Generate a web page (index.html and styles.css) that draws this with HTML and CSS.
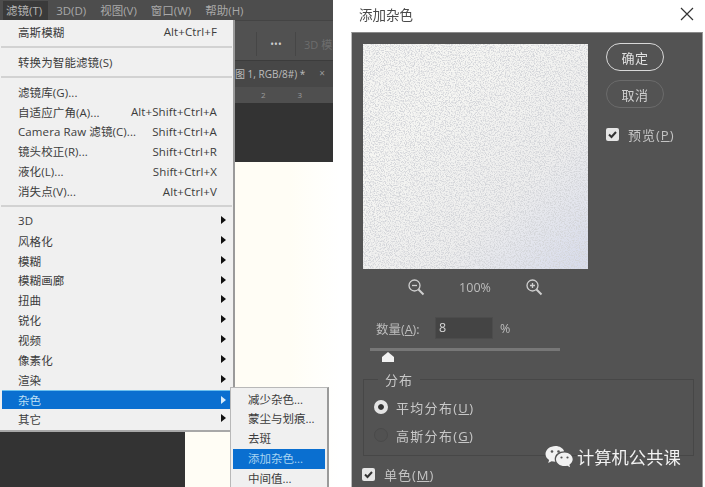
FILE: index.html
```html
<!DOCTYPE html>
<html lang="zh-CN">
<head>
  <meta charset="UTF-8">
  <title>添加杂色</title>
  <link rel="stylesheet" href="styles.css">
</head>
<body>
  <div class="shot">
    <!-- Left half: Photoshop filter menu -->
    <div class="ps">
      <div class="ps-window">
        <div class="menubar">
          <span class="menubar-item active">滤镜(T)</span>
          <span class="menubar-item">3D(D)</span>
          <span class="menubar-item">视图(V)</span>
          <span class="menubar-item">窗口(W)</span>
          <span class="menubar-item">帮助(H)</span>
        </div>
        <div class="options">
          <span class="options-sep"></span>
          <span class="options-dots">•••</span>
          <span class="options-sep"></span>
          <span class="options-3d">3D 模</span>
        </div>
        <div class="tabs"><span>图 1, RGB/8#) *</span><span class="tab-close">×</span></div>
        <div class="ruler"><span>2</span><span>3</span></div>
        <div class="workspace"></div>
      </div>
      <div class="ps-lower">
        <div class="ps-dark"></div>
        <div class="ps-cream"></div>
      </div>

      <div class="menu">
        <div class="row"><span>高斯模糊</span><span>Alt+Ctrl+F</span></div>
        <div class="sep"></div>
        <div class="row"><span>转换为智能滤镜(S)</span></div>
        <div class="sep"></div>
        <div class="row"><span>滤镜库(G)...</span></div>
        <div class="row"><span>自适应广角(A)...</span><span>Alt+Shift+Ctrl+A</span></div>
        <div class="row"><span>Camera Raw 滤镜(C)...</span><span>Shift+Ctrl+A</span></div>
        <div class="row"><span>镜头校正(R)...</span><span>Shift+Ctrl+R</span></div>
        <div class="row"><span>液化(L)...</span><span>Shift+Ctrl+X</span></div>
        <div class="row"><span>消失点(V)...</span><span>Alt+Ctrl+V</span></div>
        <div class="sep"></div>
        <div class="row sub"><span>3D</span></div>
        <div class="row sub"><span>风格化</span></div>
        <div class="row sub"><span>模糊</span></div>
        <div class="row sub"><span>模糊画廊</span></div>
        <div class="row sub"><span>扭曲</span></div>
        <div class="row sub"><span>锐化</span></div>
        <div class="row sub"><span>视频</span></div>
        <div class="row sub"><span>像素化</span></div>
        <div class="row sub"><span>渲染</span></div>
        <div class="row sub selected"><span>杂色</span></div>
        <div class="row sub"><span>其它</span></div>
      </div>

      <div class="submenu">
        <div class="subrow">减少杂色...</div>
        <div class="subrow">蒙尘与划痕...</div>
        <div class="subrow">去斑</div>
        <div class="subrow selected">添加杂色...</div>
        <div class="subrow">中间值...</div>
      </div>
    </div>

    <!-- Right half: Add Noise dialog -->
    <div class="dialog-wrap">
      <div class="titlebar">
        <span>添加杂色</span>
        <svg class="close" width="14" height="14" viewBox="0 0 14 14"><path d="M1 1l12 12M13 1L1 13" stroke="#333" stroke-width="1.2" fill="none"/></svg>
      </div>
      <div class="dialog">
        <div class="top">
          <div class="left-col">
            <svg class="preview" width="225" height="225" viewBox="0 0 225 225">
              <defs>
                <linearGradient id="tone" x1="0.3" y1="0.3" x2="0.95" y2="1">
                  <stop offset="0" stop-color="#f6f6f3"/>
                  <stop offset="0.55" stop-color="#eeeeee"/>
                  <stop offset="1" stop-color="#d8dcec"/>
                </linearGradient>
                <filter id="grain" x="0" y="0" width="100%" height="100%">
                  <feTurbulence type="fractalNoise" baseFrequency="0.8" numOctaves="3" seed="7"/>
                  <feGaussianBlur stdDeviation="0.5"/>
                  <feColorMatrix type="matrix" values="0 0 0 0 0.66  0 0 0 0 0.67  0 0 0 0 0.7  4 0 0 0 -1.75"/>
                </filter>
              </defs>
              <rect width="225" height="225" fill="url(#tone)"/>
              <rect width="225" height="225" filter="url(#grain)"/>
            </svg>
            <div class="zoom-row">
              <svg width="18" height="18" viewBox="0 0 18 18"><circle cx="7.5" cy="7.5" r="5.5" class="ico"/><path d="M5 7.5h5" class="ico"/><path d="M11.5 11.5l5 5" class="ico thick"/></svg>
              <span>100%</span>
              <svg width="18" height="18" viewBox="0 0 18 18"><circle cx="7.5" cy="7.5" r="5.5" class="ico"/><path d="M5 7.5h5M7.5 5v5" class="ico"/><path d="M11.5 11.5l5 5" class="ico thick"/></svg>
            </div>
          </div>
          <div class="side-col">
            <div class="btn primary">确定</div>
            <div class="btn">取消</div>
            <label class="check preview-check">
              <svg class="box" width="13" height="13" viewBox="0 0 13 13"><rect width="13" height="13" rx="2" fill="#e6e6e6"/><path d="M3 6.5l2.5 2.5 4.5-5" stroke="#333" stroke-width="2" fill="none"/></svg>
              <span>预览(<u>P</u>)</span>
            </label>
          </div>
        </div>

        <div class="amount">
          <span class="amount-label">数量(<u>A</u>):</span>
          <span class="amount-input">8</span>
          <span>%</span>
        </div>
        <div class="slider"><div class="thumb"></div></div>

        <fieldset class="group">
          <legend>分布</legend>
          <div class="radio"><span class="dot on"></span><span>平均分布(<u>U</u>)</span></div>
          <div class="radio"><span class="dot"></span><span>高斯分布(<u>G</u>)</span></div>
        </fieldset>

        <label class="check mono">
          <svg class="box" width="13" height="13" viewBox="0 0 13 13"><rect width="13" height="13" rx="2" fill="#e6e6e6"/><path d="M3 6.5l2.5 2.5 4.5-5" stroke="#333" stroke-width="2" fill="none"/></svg>
          <span>单色(<u>M</u>)</span>
        </label>

        <div class="watermark">
          <svg width="29" height="24" viewBox="0 0 29 24">
            <path d="M10.5 1C5 1 .5 4.6.5 9c0 2.500 1.400 4.600 3.600 6.100L3.200 18l3.300-1.700c1.200.3 2.500.5 3.800.5-.4-1-.6-1.900-.6-2.900 0-4.300 4.100-7.700 9.400-7.700C18 3.200 14.600 1 10.500 1z" fill="#f1f1f1"/>
            <path d="M19.500 7.500c-4.700 0-8.500 3-8.500 6.800s3.800 6.800 8.500 6.800c1 0 2-.1 2.900-.4l2.700 1.500-.7-2.500c2-1.300 3.300-3.200 3.300-5.400 0-3.800-3.500-6.800-8.200-6.800z" fill="#f1f1f1"/>
            <circle cx="7" cy="6.500" r="1.300" fill="#555"/><circle cx="13.500" cy="6.500" r="1.300" fill="#555"/>
            <circle cx="16.500" cy="12.500" r="1.100" fill="#555"/><circle cx="22.500" cy="12.500" r="1.100" fill="#555"/>
          </svg>
          <span>计算机公共课</span>
        </div>
      </div>
    </div>
  </div>
</body>
</html>
```

FILE: styles.css
```css
* {
  box-sizing: border-box;
}

body {
  margin: 0;
  width: 705px;
  height: 487px;
  overflow: hidden;
  background: #fff;
  font-family: "Open Sans", "Noto Sans CJK SC", sans-serif;
}

u {
  text-underline-offset: 1px;
}

/* the reference is a soft, recompressed photo of a screen */
.shot {
  display: flex;
  height: 487px;
  filter: blur(0.4px);
}

/* Photoshop side */
.ps {
  position: relative;
  width: 351px;
  display: flex;
  flex-direction: column;
  flex: none;
}

.ps-window {
  width: 333px;
  height: 162px;
  display: flex;
  flex-direction: column;
  background: #333;
}

.menubar {
  height: 20px;
  display: flex;
  align-items: center;
  padding-left: 3px;
  background: #4d4d4d;
  color: #a9a9a9;
  font-size: 11.5px;
}

.menubar-item {
  padding: 0 3px;
  margin-right: 8px;
  line-height: 19px;
}

.menubar-item.active {
  background: #3a3a3a;
  color: #b5b5b5;
  padding-right: 6px;
  margin-right: 5px;
}

.options {
  height: 40px;
  display: flex;
  align-items: center;
  padding: 6px 0 0 256px;
  background: #515151;
  border-top: 1px solid #444;
  color: #d0d0d0;
  font-size: 10px;
}

.options-sep {
  width: 1px;
  height: 24px;
  background: #464646;
}

.options-dots {
  width: 38px;
  text-align: center;
}

.options-3d {
  margin-left: 8px;
  font-size: 11px;
  color: #6d6d6d;
}

.tabs {
  height: 27px;
  display: flex;
  align-items: center;
  padding: 0 0 2px 235px;
  background: #474747;
  border-top: 1px solid #3c3c3c;
  color: #bdbdbd;
  font-size: 10px;
  white-space: nowrap;
  overflow: hidden;
}

.tab-close {
  margin-left: 14px;
  color: #9a9a9a;
}

.ruler {
  height: 16px;
  display: flex;
  padding-left: 261px;
  gap: 32px;
  background: #4f4f4f;
  color: #9c9c9c;
  font-size: 8px;
  line-height: 16px;
}

.workspace {
  flex: 1;
  background: #333;
}

.ps-lower {
  flex: 1;
  display: flex;
  align-items: flex-end;
  width: 340px;
  background: linear-gradient(90deg, #fffdf5 85%, #fff 100%);
}

.ps-dark {
  width: 185px;
  height: 55px;
  background: #333;
}

.menu {
  position: absolute;
  left: 0;
  top: 20px;
  width: 235px;
  height: 412px;
  padding-top: 2px;
  background: #f0f0f0;
  border-right: 2px solid #9a9a9a;
  border-bottom: 2px solid #a8a8a8;
  color: #3c3c3c;
  font-size: 11.5px;
}

.row {
  height: 19.85px;
  display: flex;
  align-items: center;
  justify-content: space-between;
  padding: 0 16px 0 18px;
  white-space: nowrap;
  letter-spacing: 0.1px;
}

.row.sub {
  position: relative;
}

.row.sub::after {
  content: "";
  position: absolute;
  right: 7px;
  top: 5px;
  border-left: 5px solid #111;
  border-top: 4.500px solid transparent;
  border-bottom: 4.500px solid transparent;
}

.row.selected {
  margin: 0 3px 0 2px;
  padding-left: 16px;
  background: #0a6fd0;
  border-top: 1px solid #6cc0ee;
  color: #bfe0f5;
}

.row.selected::after {
  right: 4px;
  border-left-color: #d8ecfa;
}

.sep {
  height: 10.1px;
  display: flex;
  align-items: center;
}

.sep::after {
  content: "";
  width: 100%;
  margin: 0 1px;
  height: 2px;
  background: #d2d2d2;
}

.submenu {
  position: absolute;
  left: 230px;
  top: 387px;
  width: 99px;
  height: 110px;
  padding: 1.500px 2px;
  background: #f0f0f0;
  border: 1px solid #b8b8b8;
  border-right: 2px solid #9a9a9a;
  color: #3c3c3c;
  font-size: 11.5px;
}

.subrow {
  height: 19.8px;
  line-height: 19.8px;
  padding-left: 15px;
  white-space: nowrap;
}

.subrow.selected {
  background: #0a6fd0;
  color: #a8d4f2;
}

/* Dialog side */
.dialog-wrap {
  flex: 1;
  display: flex;
  flex-direction: column;
}

.titlebar {
  height: 32px;
  display: flex;
  align-items: center;
  justify-content: space-between;
  padding: 0 11px 4px 8px;
  color: #4a4a4a;
  font-size: 13.5px;
}

.dialog {
  position: relative;
  flex: 1;
  width: 352px;
  padding: 11px 0 0 11px;
  background: #535353;
  border-top: 1px solid #8a8a8a;
  border-left: 1px solid #bbb;
  border-right: 1px solid #999;
  color: #cfcfcf;
  font-size: 13px;
}

.top {
  display: flex;
  gap: 18px;
}

.preview {
  display: block;
}

.zoom-row {
  height: 36px;
  padding: 0 45px 0 44px;
  display: flex;
  align-items: center;
  justify-content: space-between;
  color: #bdbdbd;
  font-size: 12.500px;
}

.ico {
  fill: none;
  stroke: #cfcfcf;
  stroke-width: 1.3;
}

.ico.thick {
  stroke-width: 2;
}

.side-col {
  display: flex;
  flex-direction: column;
  gap: 9px;
  margin-top: -1px;
}

.btn {
  width: 58px;
  height: 28px;
  border: 1.500px solid #6b6b6b;
  border-radius: 14px;
  display: flex;
  align-items: center;
  justify-content: center;
  font-size: 13px;
  color: #cfcfcf;
  letter-spacing: 0.5px;
}

.btn.primary {
  border-color: #d8d8d8;
  color: #e2e2e2;
}

.check {
  display: flex;
  align-items: center;
  gap: 9px;
  color: #c4c4c4;
  letter-spacing: 1px;
}

.preview-check {
  margin-top: 8px;
}

.amount {
  display: flex;
  align-items: center;
  height: 22px;
  margin-top: 12px;
  padding-left: 13px;
  color: #bcbcbc;
  font-size: 12.500px;
}

.amount-label {
  width: 59px;
}

.amount-input {
  width: 58px;
  height: 22px;
  margin-right: 7px;
  padding-left: 3px;
  background: #444;
  border: 1px solid #4c4c4c;
  color: #d6d6d6;
  line-height: 20px;
}

.slider {
  position: relative;
  width: 190px;
  height: 3px;
  margin: 9px 0 0 7px;
  background: #777;
}

.thumb {
  position: absolute;
  left: 12px;
  top: 4px;
  width: 12px;
  height: 10px;
  background: #f1f1f1;
  clip-path: polygon(50% 0, 100% 50%, 100% 100%, 0 100%, 0 50%);
}

.group {
  width: 331px;
  height: 86px;
  margin: 19px 0 0 0;
  padding: 4px 0 0 10px;
  border: 1px solid #474747;
  font-size: 13px;
  color: #c8c8c8;
}

.group legend {
  margin-left: 4px;
  padding: 0 7px;
  letter-spacing: 1px;
}

.radio {
  height: 28px;
  display: flex;
  align-items: center;
  gap: 8px;
  letter-spacing: 1.3px;
}

.dot {
  width: 14px;
  height: 14px;
  border-radius: 50%;
  border: 1px solid #4a4a4a;
  background: #515151;
}

.dot.on {
  background: #e4e4e4;
  border: 4px solid #e4e4e4;
  box-shadow: inset 0 0 0 4px #333;
}

.mono {
  margin: 9px 0 0 -1px;
}

.watermark {
  position: absolute;
  left: 193px;
  top: 411px;
  display: flex;
  align-items: center;
  gap: 3px;
  color: #f2f2f2;
  font-size: 17.300px;
  white-space: nowrap;
}
```
